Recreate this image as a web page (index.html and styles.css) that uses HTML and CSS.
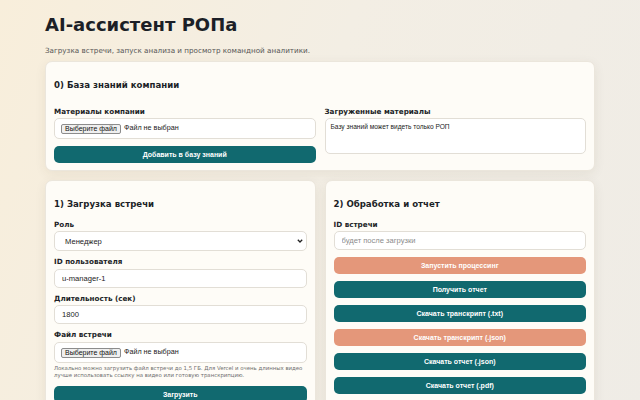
FILE: index.html
```html
<!DOCTYPE html>
<html lang="ru">
<head>
    <meta charset="UTF-8" />
    <meta name="viewport" content="width=device-width, initial-scale=1.0"/>
    <title>AI-ассистент РОПа</title>
    <link rel="stylesheet" href="styles.css">
</head>
<body>
    <div class="page">
        <header>
            <h1>AI-ассистент РОПа</h1>
            <p class="lead">Загрузка встречи, запуск анализа и просмотр командной аналитики.</p>
        </header>

        <!-- база знаний -->
        <section class="card">
            <h2>0) База знаний компании</h2>
            <div class="kb-grid">
                <div class="col">
                    <div class="field">
                        <label class="label">Материалы компании</label>
                        <label class="file file-tall">
                            <input type="file" hidden>
                            <span class="file-btn">Выберите файл</span>
                            <span class="file-name">Файл не выбран</span>
                        </label>
                    </div>
                    <button class="btn">Добавить в базу знаний</button>
                </div>
                <div class="col">
                    <div class="field">
                        <label class="label">Загруженные материалы</label>
                        <textarea class="kb-list" readonly>Базу знаний может видеть только РОП</textarea>
                    </div>
                </div>
            </div>
        </section>

        <div class="row">
            <!-- загрузка -->
            <section class="card">
                <h2>1) Загрузка встречи</h2>
                <div class="field">
                    <label class="label">Роль</label>
                    <div class="select-wrap">
                        <select class="input select">
                            <option>Менеджер</option>
                            <option>РОП</option>
                        </select>
                        <svg class="chevron" width="6" height="4" viewBox="0 0 6 4">
                            <polyline points="0.8,0.8 3,3 5.2,0.8" fill="none" stroke="#222" stroke-width="1.3"/>
                        </svg>
                    </div>
                </div>
                <div class="field">
                    <label class="label">ID пользователя</label>
                    <input class="input" type="text" value="u-manager-1">
                </div>
                <div class="field">
                    <label class="label">Длительность (сек)</label>
                    <input class="input" type="number" value="1800">
                </div>
                <div class="field field-tight">
                    <label class="label">Файл встречи</label>
                    <label class="file file-tall">
                        <input type="file" hidden>
                        <span class="file-btn">Выберите файл</span>
                        <span class="file-name">Файл не выбран</span>
                    </label>
                    <p class="hint">Локально можно загрузить файл встречи до 1,5 ГБ. Для Vercel и очень длинных видео лучше использовать ссылку на видео или готовую транскрипцию.</p>
                </div>
                <button class="btn">Загрузить</button>
            </section>

            <!-- обработка -->
            <section class="card">
                <h2>2) Обработка и отчет</h2>
                <div class="field">
                    <label class="label">ID встречи</label>
                    <input class="input" type="text" placeholder="будет после загрузки">
                </div>
                <div class="actions">
                    <button class="btn btn-warm">Запустить процессинг</button>
                    <button class="btn">Получить отчет</button>
                    <button class="btn">Скачать транскрипт (.txt)</button>
                    <button class="btn btn-warm">Скачать транскрипт (.json)</button>
                    <button class="btn">Скачать отчет (.json)</button>
                    <button class="btn">Скачать отчет (.pdf)</button>
                </div>
            </section>
        </div>
    </div>
</body>
</html>
```

FILE: styles.css
```css
* {
    box-sizing: border-box;
}
body {
    margin: 0;
    font-family: "DejaVu Sans", Verdana, sans-serif;
    line-height: 1.2;
    color: #1c1f27;
    background: linear-gradient(110deg, #f8eedb 0%, #f3eee4 45%, #efece6 100%);
    min-height: 100vh;
}
.page {
    width: 550px;
    margin: 0 auto;
    padding: 14px 0 20px;
}

/* шапка */
h1 {
    margin: 0;
    font-size: 18px;
    font-weight: bold;
}
.lead {
    margin: 11px 0 6px;
    font-size: 7.2px;
    color: #555;
}

/* карточки */
.card {
    background: #fefcf7;
    border: 1px solid #ebe6dc;
    border-radius: 7px;
    padding: 9px 8px 7px;
    box-shadow: 0 3px 12px rgba(70, 50, 20, 0.07);
}
h2 {
    margin: 8px 0 11px;
    padding-top: 1px;
    font-size: 8.6px;
    font-weight: bold;
}
.kb-grid {
    display: grid;
    grid-template-columns: 1fr 1fr;
    gap: 9px;
    margin-top: 17px;
}
.col {
    display: flex;
    flex-direction: column;
    gap: 7px;
}
.row {
    display: grid;
    grid-template-columns: 1fr 1fr;
    gap: 9px;
    margin-top: 9px;
}

/* поля */
.field {
    display: flex;
    flex-direction: column;
    margin-bottom: 7px;
}
.col .field {
    margin-bottom: 0;
}
.field-tight {
    margin-bottom: 3px;
}
.label {
    font-size: 7.2px;
    font-weight: bold;
    margin-bottom: 2px;
}
.input,
.file,
.kb-list {
    width: 100%;
    height: 19px;
    border: 1px solid #e2ded6;
    border-radius: 5px;
    background: #fff;
    font-family: "Liberation Sans", Arial, sans-serif;
    font-size: 7.6px;
    color: #222;
    padding: 0 7px;
    outline: none;
}
.input::placeholder {
    color: #8b8b8b;
}
.input[type=number]::-webkit-inner-spin-button {
    display: none;
}
.select-wrap {
    position: relative;
    display: flex;
}
.select {
    display: block;
    appearance: none;
    height: 20px;
    padding-left: 10px;
}
.chevron {
    position: absolute;
    right: 4px;
    top: 8px;
}
.file {
    display: flex;
    align-items: center;
    height: 20px;
    padding: 0 6px;
    font-size: 7.2px;
}
.file-tall {
    height: 21px;
}
.file-btn {
    height: 10px;
    line-height: 8px;
    padding: 0 3px;
    font-size: 7px;
    border: 1px solid #8c8c8c;
    border-radius: 2px;
    background: #efefef;
    color: #111;
    margin-right: 3px;
}
.file-name {
    color: #222;
}
.kb-list {
    height: 36px;
    padding: 4px 5px;
    font-size: 6.6px;
    resize: none;
}
.hint {
    margin: 2px 0 0;
    font-size: 5.4px;
    line-height: 7px;
    color: #6f6f6f;
}

/* кнопки */
.btn {
    width: 100%;
    height: 17px;
    border: 0;
    border-radius: 5px;
    background: #11696f;
    color: #fff;
    font-family: "Liberation Sans", Arial, sans-serif;
    font-size: 7px;
    font-weight: bold;
    cursor: pointer;
}
.btn-warm {
    background: #e4977a;
}
.actions {
    display: flex;
    flex-direction: column;
    gap: 7px;
}
```
